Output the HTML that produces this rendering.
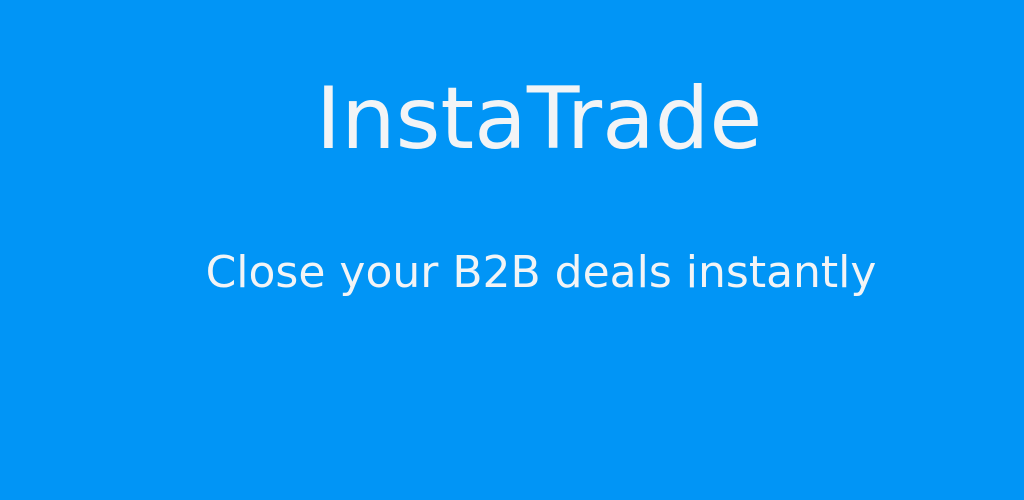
<!DOCTYPE html>
<html><head><meta charset="utf-8"><style>
html,body{margin:0;padding:0;width:1024px;height:500px;overflow:hidden;background:#0195f6;}
.t{position:absolute;left:0;width:1078px;text-align:center;color:#f2f4f6;font-family:"DejaVu Sans","Liberation Sans",sans-serif;white-space:nowrap;}
#a{top:76px;font-size:86px;line-height:86px;letter-spacing:0px;}
#b{top:251px;left:2px;font-size:44px;line-height:44px;}
</style></head><body>
<div class="t" id="a">InstaTrade</div>
<div class="t" id="b">Close your B2B deals instantly</div>
</body></html>
